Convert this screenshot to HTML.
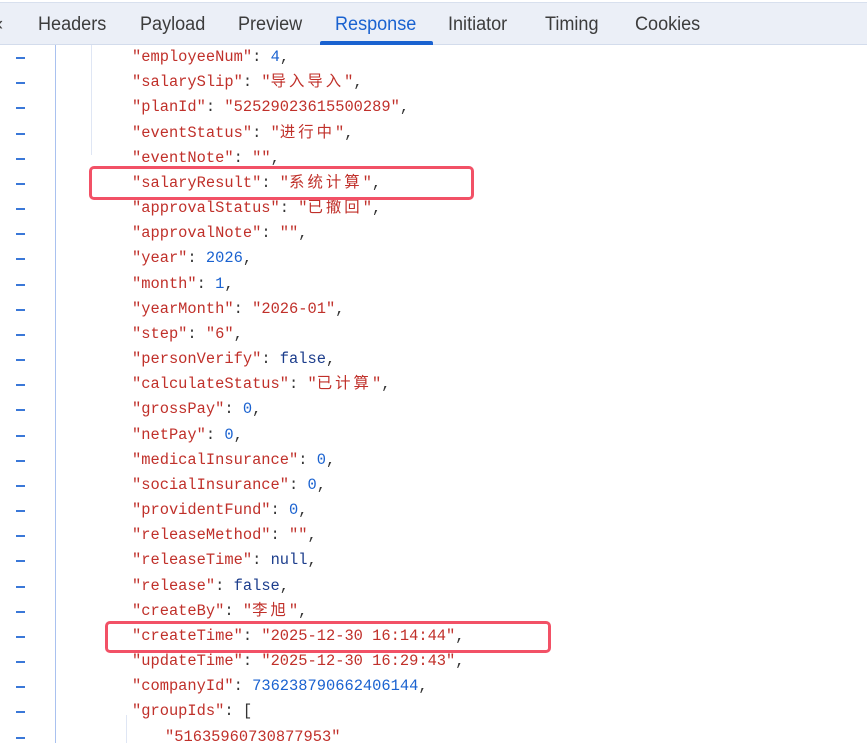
<!DOCTYPE html>
<html><head><meta charset="utf-8"><style>
*{margin:0;padding:0;box-sizing:border-box}
body{width:867px;height:743px;overflow:hidden;background:#fff;position:relative;font-family:"Liberation Sans",sans-serif}
.top{position:absolute;left:0;top:0;width:867px;height:45px;background:#ebeff7;border-bottom:1px solid #d3dcec}
.strip{position:absolute;left:0;top:0;width:867px;height:3px;background:#fff;border-bottom:1px solid #d8e0ee}
.tab{position:absolute;top:14px;font-size:19px;color:#3c3c3c;transform:scaleX(0.95);transform-origin:left}
.ul{position:absolute;left:320px;top:41px;width:113px;height:4px;background:#1a62d0;border-radius:2px 2px 0 0}
.v{position:absolute;width:1px}
.dash{position:absolute;left:16px;width:9px;height:2px;background:#3a78d8}
.ln{position:absolute;font-family:"Liberation Mono","Noto Sans CJK SC",monospace;font-size:15.4px;white-space:pre;color:#c0302a;line-height:20px}
.cj{letter-spacing:3px}
.n{color:#1a62d0}.b{color:#1c3d8c}.p{color:#333}
.box{position:absolute;border:3px solid #f25166;border-radius:5px}
</style></head><body>
<div class="top"><div class="strip"></div>
<div class="tab" style="left:-3px;">‹</div>
<div class="tab" style="left:38px">Headers</div>
<div class="tab" style="left:140px">Payload</div>
<div class="tab" style="left:238px">Preview</div>
<div class="tab" style="left:335px;color:#1a62d0">Response</div>
<div class="tab" style="left:448px">Initiator</div>
<div class="tab" style="left:545px">Timing</div>
<div class="tab" style="left:635px">Cookies</div>
<div class="ul"></div></div>
<div class="v" style="left:55px;top:45px;height:698px;background:#a9c1ef"></div>
<div class="v" style="left:91px;top:45px;height:110px;background:#dfe6f4"></div>
<div class="v" style="left:126px;top:715px;height:28px;background:#dfe6f4"></div>
<div id="c"></div>
<div class="box" style="left:89px;top:166px;width:385px;height:34px"></div>
<div class="box" style="left:105px;top:621px;width:446px;height:32px"></div>
<script>
var L=[
['"employeeNum"',': ','<span class="n">4</span>',','],
['"salarySlip"',': ','"导入导入"',','],
['"planId"',': ','"52529023615500289"',','],
['"eventStatus"',': ','"进行中"',','],
['"eventNote"',': ','""',','],
['"salaryResult"',': ','"系统计算"',','],
['"approvalStatus"',': ','"已撤回"',','],
['"approvalNote"',': ','""',','],
['"year"',': ','<span class="n">2026</span>',','],
['"month"',': ','<span class="n">1</span>',','],
['"yearMonth"',': ','"2026-01"',','],
['"step"',': ','"6"',','],
['"personVerify"',': ','<span class="b">false</span>',','],
['"calculateStatus"',': ','"已计算"',','],
['"grossPay"',': ','<span class="n">0</span>',','],
['"netPay"',': ','<span class="n">0</span>',','],
['"medicalInsurance"',': ','<span class="n">0</span>',','],
['"socialInsurance"',': ','<span class="n">0</span>',','],
['"providentFund"',': ','<span class="n">0</span>',','],
['"releaseMethod"',': ','""',','],
['"releaseTime"',': ','<span class="b">null</span>',','],
['"release"',': ','<span class="b">false</span>',','],
['"createBy"',': ','"李旭"',','],
['"createTime"',': ','"2025-12-30 16:14:44"',','],
['"updateTime"',': ','"2025-12-30 16:29:43"',','],
['"companyId"',': ','<span class="n">736238790662406144</span>',','],
['"groupIds"',': ','<span class="p">[</span>',''],
['','','"51635960730877953"','']];
var h='';
for(var i=0;i<L.length;i++){var y=58+25.17*i;
h+='<div class="dash" style="top:'+(y-1)+'px"></div>';
var x=i==27?165:132;
var v=L[i][2].replace(/([\u4e00-\u9fff]+)/g,'<span class="cj">$1</span>');
h+='<div class="ln" style="left:'+x+'px;top:'+(y-11)+'px">'+L[i][0]+'<span class="p">'+L[i][1]+'</span>'+v+'<span class="p">'+L[i][3]+'</span></div>';}
document.getElementById('c').innerHTML=h;
</script>
</body></html>
